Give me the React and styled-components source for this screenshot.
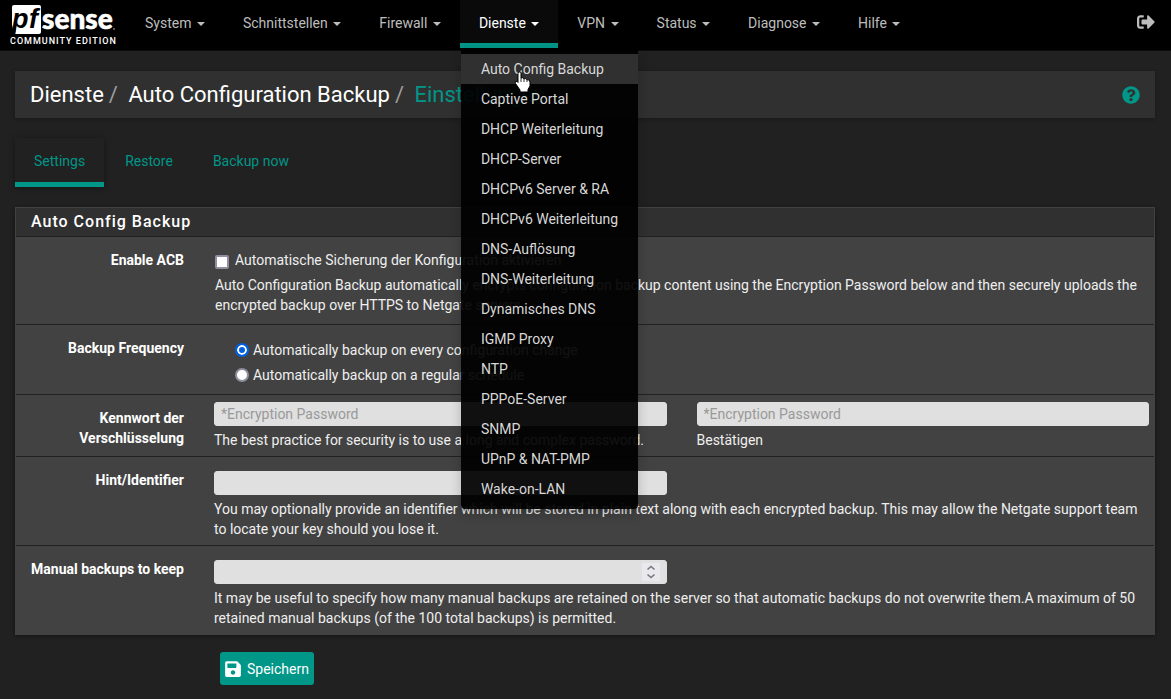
import { useState } from "react";
import styled, { createGlobalStyle } from "styled-components";
import { FaSignOutAlt, FaQuestionCircle, FaSave } from "react-icons/fa";

const GlobalStyle = createGlobalStyle`
  * {
    box-sizing: border-box;
  }

  body {
    margin: 0;
    background-color: #212121;
    color: #efefef;
    font-family: Roboto, "Liberation Sans", sans-serif;
    font-size: 14px;
    line-height: 20px;
  }
`;

const Nav = styled.nav`
  display: flex;
  align-items: flex-start;
  height: 51px;
  padding: 0 16px 0 10px;
  background-color: #000;
  border-bottom: 1px solid #0c0c0c;
`;

const Brand = styled.a`
  width: 107px;
  margin-right: 9px;
  color: #fff;
  text-decoration: none;
`;

const BrandLogo = styled.svg`
  display: block;
`;

const Edition = styled.div`
  font-size: 9px;
  font-weight: 500;
  line-height: 12px;
  letter-spacing: 1px;
  white-space: nowrap;
`;

const NavList = styled.ul`
  display: flex;
  flex: 1;
  margin: 0;
  padding: 0;
  list-style: none;
`;

const NavItem = styled.li`
  position: relative;
`;

const NavButton = styled.button`
  display: block;
  height: 48px;
  padding: 6px 19px 3px;
  border: 0;
  border-bottom: 5px solid ${(props) => (props.$active ? "#009688" : "transparent")};
  background-color: ${(props) => (props.$active ? "#0a0a0a" : "transparent")};
  color: ${(props) => (props.$active ? "#fff" : "#bdbdbd")};
  font: inherit;
  white-space: nowrap;
  cursor: pointer;
`;

const Caret = styled.span`
  display: inline-block;
  margin-left: 2px;
  vertical-align: middle;
  border-top: 4px solid;
  border-left: 4px solid transparent;
  border-right: 4px solid transparent;
`;

const Menu = styled.ul`
  position: absolute;
  top: 100%;
  left: 1px;
  z-index: 10;
  margin: 0;
  padding: 6px 0 5px;
  list-style: none;
  border-radius: 0 0 4px 4px;
  background-color: rgba(0, 0, 0, 0.93);
  box-shadow: 0 6px 12px rgba(0, 0, 0, 0.2);
`;

const MenuLink = styled.a`
  display: block;
  padding: 5px 20px;
  background-color: ${(props) => (props.$active ? "#303030" : "transparent")};
  color: #d8d8d8;
  text-decoration: none;
  white-space: nowrap;
`;

const Pointer = styled.svg`
  position: absolute;
  top: 71px;
  left: 54px;
  z-index: 20;
  pointer-events: none;
`;

const Logout = styled.a`
  display: flex;
  margin-top: 13px;
  color: #bdbdbd;
  font-size: 18px;
`;

const Container = styled.main`
  padding: 20px 16px 14px 15px;
`;

const PageHeader = styled.header`
  display: flex;
  align-items: center;
  justify-content: space-between;
  padding: 9px 15px 8px;
  background-color: #303030;
  box-shadow: 0 1px 4px rgba(0, 0, 0, 0.3);
`;

const Breadcrumb = styled.ol`
  display: flex;
  margin: 0;
  padding: 0;
  list-style: none;
  color: #fff;
  font-size: 22px;
  line-height: 30px;
`;

const Crumb = styled.li`
  &:not(:first-child)::before {
    content: "/\\00a0";
    padding: 0 5px;
    color: #9e9e9e;
  }
`;

const CrumbLink = styled.a`
  color: ${(props) => (props.$active ? "#009688" : "#fff")};
  text-decoration: none;
`;

const Help = styled.a`
  display: flex;
  color: #009688;
  font-size: 18px;
`;

const Tabs = styled.ul`
  display: flex;
  margin: 20px 0;
  padding: 0;
  list-style: none;
`;

const Tab = styled.a`
  display: block;
  height: 49px;
  padding: 13px 19px 0;
  margin-right: 2px;
  border-bottom: 5px solid ${(props) => (props.$active ? "#009688" : "transparent")};
  box-shadow: ${(props) => (props.$active ? "0 1px 6px rgba(0, 0, 0, 0.4)" : "none")};
  color: #009688;
  text-decoration: none;
`;

const Panel = styled.section`
  border: 1px solid #424242;
  background-color: #424242;
  box-shadow: 0 1px 4px rgba(0, 0, 0, 0.4);
`;

const PanelTitle = styled.h2`
  margin: 0;
  padding: 4px 15px;
  background-color: #303030;
  color: #fff;
  font-size: 16px;
  font-weight: 500;
  line-height: 20px;
  letter-spacing: 1px;
`;

const Row = styled.div`
  display: grid;
  grid-template-columns: 198px 1fr;
  padding: ${(props) => (props.$tight ? "7px" : "13px")} 5px ${(props) => (props.$fields ? "6px" : "9px")} 0;
  border-top: 1px solid #212121;
`;

const RowLabel = styled.label`
  padding: ${(props) => (props.$tight ? "6px" : "0")} 30px 0 15px;
  color: #fff;
  font-weight: 700;
  text-align: right;
`;

const Fields = styled.div`
  display: grid;
  grid-template-columns: 1fr 1fr;
  gap: 4px 30px;
  padding-top: ${(props) => (props.$tight ? "0" : "1px")};
`;

const Field = styled.div`
  display: grid;
  gap: 4px;
`;

const HelpText = styled.p`
  grid-column: ${(props) => (props.$wide ? "1 / -1" : "auto")};
  margin: 0;
`;

const Choices = styled.div`
  display: grid;
  gap: 5px;
  padding: ${(props) => (props.$indent ? "2px 0 0 21px" : "0 0 0 1px")};
`;

const Check = styled.label`
  display: flex;
  align-items: center;
  gap: ${(props) => (props.$radio ? "4px" : "6px")};
`;

const Toggle = styled.input`
  appearance: none;
  width: 14px;
  height: 14px;
  margin: ${(props) => (props.type === "radio" ? "0" : "3px 0 0")};
  border: 2px solid #8f8f9d;
  border-radius: ${(props) => (props.type === "radio" ? "50%" : "2px")};
  background-color: #fff;

  &:checked {
    border-color: #0060df;
    background-color: #0060df;
    box-shadow: inset 0 0 0 2px #fff;
  }
`;

const Input = styled.input`
  display: block;
  width: 100%;
  height: 24px;
  padding: 0 6px;
  border: 1px solid #e0e0e0;
  border-radius: 3px;
  background-color: #e0e0e0;
  color: #212121;
  font: inherit;
  appearance: textfield;

  &::placeholder {
    color: #999;
  }

  &::-webkit-inner-spin-button {
    display: none;
  }
`;

const NumberBox = styled.div`
  position: relative;
`;

const Spinner = styled.span`
  position: absolute;
  top: 3px;
  right: 7px;
  display: flex;
  width: 18px;
  height: 18px;
  background-color: #e9e9ed;
`;

const SaveButton = styled.button`
  display: flex;
  align-items: center;
  gap: 5px;
  height: 33px;
  margin: 17px 0 0 205px;
  padding: 0 5px 0 4px;
  border: 0;
  border-radius: 3px;
  background-color: #009688;
  color: #fff;
  font: inherit;
  cursor: pointer;
`;

const navItems = ["System", "Schnittstellen", "Firewall", "Dienste", "VPN", "Status", "Diagnose", "Hilfe"];

const services = [
  "Auto Config Backup",
  "Captive Portal",
  "DHCP Weiterleitung",
  "DHCP-Server",
  "DHCPv6 Server & RA",
  "DHCPv6 Weiterleitung",
  "DNS-Auflösung",
  "DNS-Weiterleitung",
  "Dynamisches DNS",
  "IGMP Proxy",
  "NTP",
  "PPPoE-Server",
  "SNMP",
  "UPnP & NAT-PMP",
  "Wake-on-LAN",
];

function Logo() {
  return (
    <BrandLogo width="107" height="35" viewBox="0 0 107 35" role="img" aria-label="pfSense">
      <path d="M4 5h25q2 0 2 2v25q0 2-2 2H5l1-5H3l-1-4V7q0-2 2-2z" fill="#fff" />
      <g fontFamily="'Liberation Sans', sans-serif" fontWeight="700" fontStyle="italic" fontSize="27" fill="#000">
        <text x="2" y="28">p</text>
        <text x="19" y="28">f</text>
      </g>
      <text x="32" y="29" fontFamily="Lato, sans-serif" fontWeight="900" fontSize="28" fill="#fff" stroke="#fff" strokeWidth="0.6">
        sense
      </text>
      <circle cx="104" cy="29" r="1" fill="#777" />
    </BrandLogo>
  );
}

function ServicesMenu() {
  return (
    <>
      <Menu>
        {services.map((name, i) => (
          <li key={name}>
            <MenuLink href="#" $active={i === 0}>{name}</MenuLink>
          </li>
        ))}
      </Menu>
      <Pointer width="18" height="22" viewBox="0 0 18 22" aria-hidden="true">
        <path
          d="M4 2.5Q4 1 5.500 1T7 2.500V7q2-1 3 .8 2-.8 3 .9 3-.5 3 2.300V15l-2 3.500V21H6v-2L1.500 12.500Q.5 10.500 2 10.200q1-.2 2 1.300z"
          fill="#fff"
          stroke="#000"
          strokeWidth="1"
        />
        <path d="M7 7v4M10 8v3M13 9v2" stroke="#000" strokeWidth="0.8" />
      </Pointer>
    </>
  );
}

function App() {
  const [open, setOpen] = useState("Dienste");
  const [frequency, setFrequency] = useState("every");

  return (
    <>
      <GlobalStyle />
      <Nav>
        <Brand href="#">
          <Logo />
          <Edition>COMMUNITY EDITION</Edition>
        </Brand>
        <NavList>
          {navItems.map((name) => (
            <NavItem key={name}>
              <NavButton $active={open === name} onClick={() => setOpen(name)}>
                {name} <Caret />
              </NavButton>
              {name === "Dienste" && open === name && <ServicesMenu />}
            </NavItem>
          ))}
        </NavList>
        <Logout href="#" aria-label="Abmelden">
          <FaSignOutAlt />
        </Logout>
      </Nav>
      <Container>
        <PageHeader>
          <Breadcrumb>
            <Crumb><CrumbLink href="#">Dienste</CrumbLink></Crumb>
            <Crumb><CrumbLink href="#">Auto Configuration Backup</CrumbLink></Crumb>
            <Crumb><CrumbLink href="#" $active>Einstellungen</CrumbLink></Crumb>
          </Breadcrumb>
          <Help href="#" aria-label="Hilfe"><FaQuestionCircle /></Help>
        </PageHeader>
        <Tabs>
          <li><Tab href="#" $active>Settings</Tab></li>
          <li><Tab href="#">Restore</Tab></li>
          <li><Tab href="#">Backup now</Tab></li>
        </Tabs>
        <form onSubmit={(e) => e.preventDefault()}>
          <Panel>
            <PanelTitle>Auto Config Backup</PanelTitle>
            <Row>
              <RowLabel htmlFor="enable">Enable ACB</RowLabel>
              <Choices>
                <Check>
                  <Toggle id="enable" type="checkbox" />
                  Automatische Sicherung der Konfiguration aktivieren
                </Check>
                <HelpText>
                  Auto Configuration Backup automatically encrypts configuration backup content using the Encryption
                  Password below and then securely uploads the encrypted backup over HTTPS to Netgate servers.
                </HelpText>
              </Choices>
            </Row>
            <Row>
              <RowLabel as="div" id="frequency">Backup Frequency</RowLabel>
              <Choices $indent role="radiogroup" aria-labelledby="frequency">
                <Check $radio>
                  <Toggle type="radio" name="frequency" checked={frequency === "every"} onChange={() => setFrequency("every")} />
                  Automatically backup on every configuration change
                </Check>
                <Check $radio>
                  <Toggle type="radio" name="frequency" checked={frequency === "cron"} onChange={() => setFrequency("cron")} />
                  Automatically backup on a regular schedule
                </Check>
              </Choices>
            </Row>
            <Row $tight $fields>
              <RowLabel $tight htmlFor="password">Kennwort der Verschlüsselung</RowLabel>
              <Fields $tight>
                <Field>
                  <Input id="password" type="password" placeholder="*Encryption Password" />
                  <HelpText>The best practice for security is to use a long and complex password.</HelpText>
                </Field>
                <Field>
                  <Input id="confirm" type="password" placeholder="*Encryption Password" />
                  <HelpText as="label" htmlFor="confirm">Bestätigen</HelpText>
                </Field>
              </Fields>
            </Row>
            <Row $fields>
              <RowLabel htmlFor="hint">Hint/Identifier</RowLabel>
              <Fields>
                <Input id="hint" type="text" />
                <HelpText $wide>
                  You may optionally provide an identifier which will be stored in plain text along with each encrypted
                  backup. This may allow the Netgate support team to locate your key should you lose it.
                </HelpText>
              </Fields>
            </Row>
            <Row $fields>
              <RowLabel htmlFor="keep">Manual backups to keep</RowLabel>
              <Fields>
                <NumberBox>
                  <Input id="keep" type="number" />
                  <Spinner>
                    <svg width="18" height="18" viewBox="0 0 18 18" fill="none" stroke="#77777f" strokeWidth="1.6">
                      <path d="M5.500 6.500 9 3.500l3.500 3M5.500 11.500 9 14.500l3.500-3" />
                    </svg>
                  </Spinner>
                </NumberBox>
                <HelpText $wide>
                  It may be useful to specify how many manual backups are retained on the server so that automatic
                  backups do not overwrite them.A maximum of 50 retained manual backups (of the 100 total backups) is
                  permitted.
                </HelpText>
              </Fields>
            </Row>
          </Panel>
          <SaveButton type="submit">
            <FaSave size={18} />
            Speichern
          </SaveButton>
        </form>
      </Container>
    </>
  );
}

export default App;
